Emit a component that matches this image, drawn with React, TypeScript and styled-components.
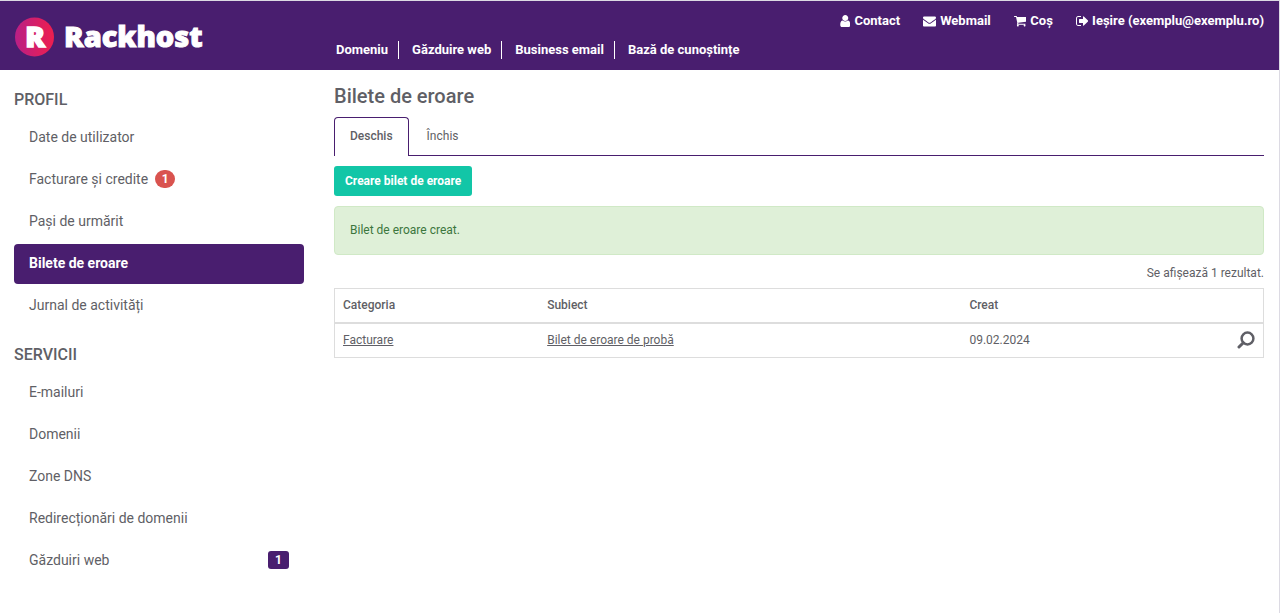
import React from 'react';
import styled, { createGlobalStyle, css } from 'styled-components';

const purple = '#491e6f';
const ink = '#5f5f66';
const line = '#dddddd';

const GlobalStyle = createGlobalStyle`
  *, *::before, *::after { box-sizing: border-box; }
  body {
    margin: 0;
    background: #fff;
    color: ${ink};
    font-family: Roboto, "Liberation Sans", sans-serif;
    font-size: 12px;
    line-height: 18px;
  }
  a { color: inherit; }
`;

const Page = styled.div`
  min-height: 100vh;
  border-top: 1px solid #dcdae3;
  border-right: 1px solid #dcdae3;
`;

const Header = styled.header`
  display: flex;
  gap: 30px;
  height: 69px;
  padding: 0 15px 0 14px;
  background: ${purple};
  color: #fff;
  font-size: 13px;
  font-weight: 700;
`;

const Brand = styled.a`
  display: flex;
  align-items: center;
  flex: 0 0 292px;
  text-decoration: none;
  svg { display: block; }
`;

const HeaderNavs = styled.div`
  display: flex;
  flex: 1;
  flex-direction: column;
  justify-content: space-between;
  padding: 11px 0;
`;

const UserNav = styled.nav`
  display: flex;
  justify-content: flex-end;
  gap: 23px;
`;

const UserLink = styled.a`
  display: flex;
  align-items: center;
  gap: 4px;
  text-decoration: none;
  svg { display: block; height: 13px; fill: currentColor; }
`;

const MainNav = styled.nav`
  display: flex;
`;

const MainLink = styled.a`
  padding: 0 10px 0 13px;
  border-right: 1px solid #fff;
  text-decoration: none;
  &:first-child { padding-left: 0; }
  &:last-child { border-right: 0; }
`;

const Layout = styled.div`
  display: flex;
  gap: 30px;
  padding: 15px 15px 20px 14px;
`;

const Sidebar = styled.aside`
  flex: 0 0 290px;
  padding-top: 2px;
`;

const Group = styled.section`
  margin-bottom: 16px;
`;

const GroupTitle = styled.h2`
  margin: 0 0 5px;
  font-size: 16px;
  font-weight: 500;
  line-height: 26px;
`;

const Menu = styled.ul`
  display: flex;
  flex-direction: column;
  gap: 2px;
  margin: 0;
  padding: 0;
  list-style: none;
`;

const MenuLink = styled.a<{ $active?: boolean }>`
  display: flex;
  align-items: center;
  height: 40px;
  padding: 0 15px 2px;
  border-radius: 4px;
  font-size: 14px;
  text-decoration: none;
  ${(p) => p.$active && css`
    background: ${purple};
    color: #fff;
    font-weight: 700;
  `}
`;

const Badge = styled.span<{ $round?: boolean }>`
  width: ${(p) => (p.$round ? 20 : 21)}px;
  height: 18px;
  margin-left: ${(p) => (p.$round ? '7px' : 'auto')};
  border-radius: ${(p) => (p.$round ? 9 : 3)}px;
  background: ${(p) => (p.$round ? '#d9534f' : purple)};
  color: #fff;
  font-size: 12px;
  font-weight: 700;
  line-height: 18px;
  text-align: center;
`;

const Main = styled.main`
  flex: 1;
  min-width: 0;
`;

const Title = styled.h1`
  margin: 0 0 10px;
  font-size: 20px;
  font-weight: 500;
  line-height: 22px;
`;

const Tabs = styled.div`
  display: flex;
  gap: 2px;
  border-bottom: 1px solid ${purple};
`;

const Tab = styled.button<{ $active?: boolean }>`
  height: 39px;
  margin-bottom: -1px;
  padding: 0 15px 2px;
  border: 1px solid ${(p) => (p.$active ? purple : 'transparent')};
  border-bottom: 0;
  border-radius: 4px 4px 0 0;
  background: ${(p) => (p.$active ? '#fff' : 'transparent')};
  color: inherit;
  font: inherit;
  font-weight: ${(p) => (p.$active ? 500 : 400)};
`;

const CreateButton = styled.button`
  display: block;
  height: 30px;
  margin: 10px 0;
  padding: 0 11px;
  border: 0;
  border-radius: 3px;
  background: #12c6a7;
  color: #fff;
  font: inherit;
  font-weight: 700;
`;

const Notice = styled.div`
  padding: 15px;
  border: 1px solid #d0e9c6;
  border-radius: 4px;
  background: #dff0d8;
  color: #3c763d;
  line-height: 17px;
`;

const Summary = styled.p`
  margin: 9px 0 6px;
  text-align: right;
`;

const Table = styled.table`
  width: 100%;
  border: 1px solid ${line};
  border-collapse: separate;
  border-spacing: 0;
  table-layout: fixed;
  text-align: left;
`;

const HeadCell = styled.th<{ $width: string }>`
  width: ${(p) => p.$width};
  height: 35px;
  padding: 0 8px 1px;
  border-bottom: 2px solid ${line};
  font-weight: 500;
`;

const Cell = styled.td<{ $align?: 'right' }>`
  height: 33px;
  padding: 0 8px 2px;
  text-align: ${(p) => p.$align ?? 'left'};
  svg { display: block; margin-left: auto; }
`;

const ViewLink = styled.a`
  display: block;
`;

const UserIcon = () => (
  <svg viewBox="224 128 1344 1664" aria-hidden="true">
    <path d="M1536 1399q0 109-62.5 187t-150.5 78h-854q-88 0-150.5-78t-62.5-187q0-85 8.5-160.5t31.5-152 58.5-131 94-89 134.5-34.5q131 128 313 128t313-128q76 0 134.5 34.5t94 89 58.5 131 31.5 152 8.5 160.5zm-256-887q0 159-112.5 271.5t-271.5 112.5-271.5-112.5-112.5-271.5 112.5-271.5 271.5-112.5 271.5 112.5 112.5 271.5z" />
  </svg>
);

const MailIcon = () => (
  <svg viewBox="0 64 1792 1792" aria-hidden="true">
    <path d="M1792 710v794q0 66-47 113t-113 47h-1472q-66 0-113-47t-47-113v-794q44 49 101 87 362 246 497 345 57 42 92.5 65.5t94.5 48 110 24.5h2q51 0 110-24.5t94.5-48 92.5-65.5q170-123 498-345 57-39 100-87zm0-294q0 79-49 151t-122 123q-376 261-468 325-10 7-42.5 31t-54 38.5-52 32.5-57.5 27-50 9h-2q-23 0-50-9t-57.5-27-52-32.5-54-38.5-42.5-31q-91-64-262-182.5t-205-142.5q-62-42-117-115.5t-55-136.5q0-78 41.5-130t118.5-52h1472q65 0 112.5 47t47.5 113z" />
  </svg>
);

const CartIcon = () => (
  <svg viewBox="64 128 1664 1728" aria-hidden="true">
    <path d="M704 1536q0 52-38 90t-90 38-90-38-38-90 38-90 90-38 90 38 38 90zm896 0q0 52-38 90t-90 38-90-38-38-90 38-90 90-38 90 38 38 90zm128-1088v512q0 24-16.5 42.5t-40.5 21.5l-1044 122q13 60 13 70 0 16-24 64h920q26 0 45 19t19 45-19 45-45 19h-1024q-26 0-45-19t-19-45q0-11 8-31.5t16-36 21.5-40 15.5-29.5l-177-823h-204q-26 0-45-19t-19-45 19-45 45-19h256q16 0 28.5 6.5t19.5 15.5 13 24.5 8 26 5.5 29.5 4.5 26h1201q26 0 45 19t19 45z" />
  </svg>
);

const SignOutIcon = () => (
  <svg viewBox="64 128 1568 1664" aria-hidden="true">
    <path d="M704 1440q0 4 1 20t.5 26.5-3 23.5-10 19.5-20.5 6.5h-320q-119 0-203.5-84.5t-84.5-203.5v-704q0-119 84.5-203.5t203.5-84.5h320q13 0 22.5 9.5t9.5 22.5q0 4 1 20t.5 26.5-3 23.5-10 19.5-20.5 6.5h-320q-66 0-113 47t-47 113v704q0 66 47 113t113 47h312l11.5 1 11.5 3 8 5.5 7 9 2 13.5zm928-544q0 26-19 45l-544 544q-19 19-45 19t-45-19-19-45v-288h-448q-26 0-45-19t-19-45v-384q0-26 19-45t45-19h448v-288q0-26 19-45t45-19 45 19l544 544q19 19 19 45z" />
  </svg>
);

const SearchIcon = () => (
  <svg width="18" height="18" viewBox="0 0 18 18" fill="none" stroke={ink} aria-hidden="true">
    <circle cx="10.5" cy="7.5" r="5.9" strokeWidth="2.5" />
    <path d="M6.3 11.7 2 16" strokeWidth="3" strokeLinecap="round" />
  </svg>
);

const Logo = () => (
  <svg width="200" height="50" viewBox="0 0 200 50" role="img" aria-label="Rackhost">
    <defs>
      <linearGradient id="disc" x1="0" y1="0" x2="1" y2="0">
        <stop offset="0" stopColor="#b91f86" />
        <stop offset="1" stopColor="#ee1f4e" />
      </linearGradient>
    </defs>
    <circle cx="20.5" cy="26" r="19.5" fill="url(#disc)" />
    <g fill="#fff" stroke="#fff" fontFamily="'Open Sans', 'Noto Sans', sans-serif" fontWeight="800">
      <text x="21" y="36" fontSize="29" strokeWidth="1.6" textAnchor="middle">R</text>
      <text x="50" y="36" fontSize="29" strokeWidth="1">Rackhost</text>
    </g>
  </svg>
);

const userLinks = [
  { label: 'Contact', Icon: UserIcon },
  { label: 'Webmail', Icon: MailIcon },
  { label: 'Coș', Icon: CartIcon },
  { label: 'Ieșire (exemplu@exemplu.ro)', Icon: SignOutIcon },
];

const mainLinks = ['Domeniu', 'Găzduire web', 'Business email', 'Bază de cunoștințe'];

type Item = { label: string; active?: boolean; alert?: number; count?: number };

const groups: { title: string; items: Item[] }[] = [
  {
    title: 'PROFIL',
    items: [
      { label: 'Date de utilizator' },
      { label: 'Facturare și credite', alert: 1 },
      { label: 'Pași de urmărit' },
      { label: 'Bilete de eroare', active: true },
      { label: 'Jurnal de activități' },
    ],
  },
  {
    title: 'SERVICII',
    items: [
      { label: 'E-mailuri' },
      { label: 'Domenii' },
      { label: 'Zone DNS' },
      { label: 'Redirecționări de domenii' },
      { label: 'Găzduiri web', count: 1 },
    ],
  },
];

export default function App() {
  return (
    <>
      <GlobalStyle />
      <Page>
        <Header>
          <Brand href="#"><Logo /></Brand>
          <HeaderNavs>
            <UserNav>
              {userLinks.map(({ label, Icon }) => (
                <UserLink key={label} href="#"><Icon />{label}</UserLink>
              ))}
            </UserNav>
            <MainNav>
              {mainLinks.map((label) => <MainLink key={label} href="#">{label}</MainLink>)}
            </MainNav>
          </HeaderNavs>
        </Header>
        <Layout>
          <Sidebar>
            {groups.map((group) => (
              <Group key={group.title}>
                <GroupTitle>{group.title}</GroupTitle>
                <Menu>
                  {group.items.map((item) => (
                    <li key={item.label}>
                      <MenuLink href="#" $active={item.active}>
                        {item.label}
                        {item.alert && <Badge $round>{item.alert}</Badge>}
                        {item.count && <Badge>{item.count}</Badge>}
                      </MenuLink>
                    </li>
                  ))}
                </Menu>
              </Group>
            ))}
          </Sidebar>
          <Main>
            <Title>Bilete de eroare</Title>
            <Tabs role="tablist">
              <Tab type="button" role="tab" aria-selected="true" $active>Deschis</Tab>
              <Tab type="button" role="tab" aria-selected="false">Închis</Tab>
            </Tabs>
            <CreateButton type="button">Creare bilet de eroare</CreateButton>
            <Notice role="status">Bilet de eroare creat.</Notice>
            <Summary>Se afișează 1 rezultat.</Summary>
            <Table>
              <thead>
                <tr>
                  <HeadCell scope="col" $width="22%">Categoria</HeadCell>
                  <HeadCell scope="col" $width="45.5%">Subiect</HeadCell>
                  <HeadCell scope="col" $width="21.5%">Creat</HeadCell>
                  <HeadCell as="td" $width="11%" />
                </tr>
              </thead>
              <tbody>
                <tr>
                  <Cell><a href="#">Facturare</a></Cell>
                  <Cell><a href="#">Bilet de eroare de probă</a></Cell>
                  <Cell>09.02.2024</Cell>
                  <Cell $align="right">
                    <ViewLink href="#" aria-label="Vizualizare"><SearchIcon /></ViewLink>
                  </Cell>
                </tr>
              </tbody>
            </Table>
          </Main>
        </Layout>
      </Page>
    </>
  );
}
